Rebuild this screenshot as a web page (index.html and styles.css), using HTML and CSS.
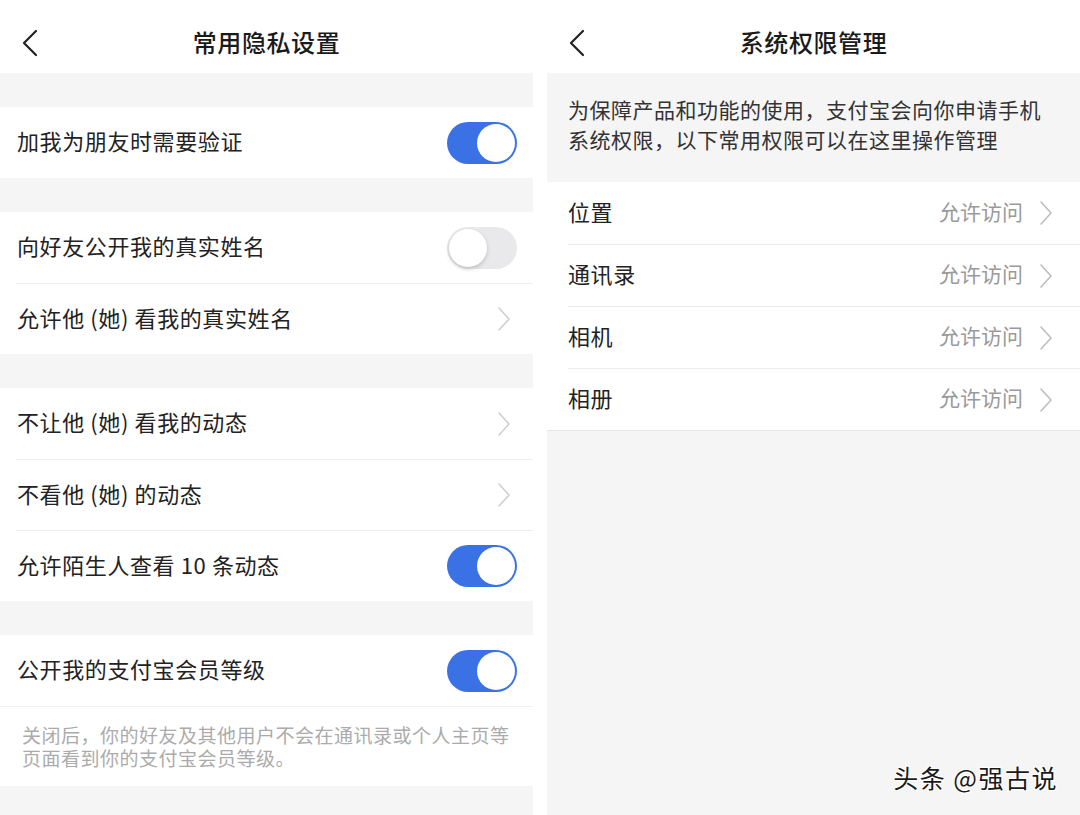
FILE: index.html
```html
<!DOCTYPE html>
<html lang="zh-CN">
<head>
    <meta charset="UTF-8">
    <meta name="viewport" content="width=device-width, initial-scale=1.0">
    <title>隐私设置</title>
    <link rel="stylesheet" href="styles.css">
</head>
<body>
    <div id="pantallas">
        <!-- pantalla izquierda -->
        <div class="pantalla">
            <div class="cabecera">
                <svg class="atras" width="20" height="30" viewBox="0 0 20 30"><path d="M16 3 L4 15 L16 27" fill="none" stroke="#222" stroke-width="2.2" stroke-linecap="round" stroke-linejoin="round"/></svg>
                <div class="titulo">常用隐私设置</div>
            </div>

            <div class="hueco"></div>
            <div class="grupo">
                <div class="fila">
                    <span class="etiqueta">加我为朋友时需要验证</span>
                    <span class="interruptor activo"><span class="perilla"></span></span>
                </div>
            </div>

            <div class="hueco"></div>
            <div class="grupo">
                <div class="fila">
                    <span class="etiqueta">向好友公开我的真实姓名</span>
                    <span class="interruptor"><span class="perilla"></span></span>
                </div>
                <div class="fila">
                    <span class="etiqueta">允许他 (她) 看我的真实姓名</span>
                    <svg class="flecha" width="14" height="26" viewBox="0 0 14 26"><path d="M2 2 L12 13 L2 24" fill="none" stroke="#cfcfcf" stroke-width="1.6" stroke-linecap="round" stroke-linejoin="round"/></svg>
                </div>
            </div>

            <div class="hueco"></div>
            <div class="grupo">
                <div class="fila">
                    <span class="etiqueta">不让他 (她) 看我的动态</span>
                    <svg class="flecha" width="14" height="26" viewBox="0 0 14 26"><path d="M2 2 L12 13 L2 24" fill="none" stroke="#cfcfcf" stroke-width="1.6" stroke-linecap="round" stroke-linejoin="round"/></svg>
                </div>
                <div class="fila">
                    <span class="etiqueta">不看他 (她) 的动态</span>
                    <svg class="flecha" width="14" height="26" viewBox="0 0 14 26"><path d="M2 2 L12 13 L2 24" fill="none" stroke="#cfcfcf" stroke-width="1.6" stroke-linecap="round" stroke-linejoin="round"/></svg>
                </div>
                <div class="fila">
                    <span class="etiqueta">允许陌生人查看 10 条动态</span>
                    <span class="interruptor activo"><span class="perilla"></span></span>
                </div>
            </div>

            <div class="hueco"></div>
            <div class="grupo">
                <div class="fila">
                    <span class="etiqueta">公开我的支付宝会员等级</span>
                    <span class="interruptor activo"><span class="perilla"></span></span>
                </div>
            </div>
            <div class="nota">关闭后，你的好友及其他用户不会在通讯录或个人主页等页面看到你的支付宝会员等级。</div>
            <div class="relleno"></div>
        </div>

        <!-- pantalla derecha -->
        <div class="pantalla">
            <div class="cabecera">
                <svg class="atras" width="20" height="30" viewBox="0 0 20 30"><path d="M16 3 L4 15 L16 27" fill="none" stroke="#222" stroke-width="2.2" stroke-linecap="round" stroke-linejoin="round"/></svg>
                <div class="titulo">系统权限管理</div>
            </div>

            <div class="descripcion">为保障产品和功能的使用，支付宝会向你申请手机系统权限，以下常用权限可以在这里操作管理</div>

            <div class="grupo permisos">
                <div class="fila corta">
                    <span class="etiqueta">位置</span>
                    <span class="valor">允许访问</span>
                    <svg class="flecha" width="14" height="26" viewBox="0 0 14 26"><path d="M2 2 L12 13 L2 24" fill="none" stroke="#bdbdbd" stroke-width="1.6" stroke-linecap="round" stroke-linejoin="round"/></svg>
                </div>
                <div class="fila corta">
                    <span class="etiqueta">通讯录</span>
                    <span class="valor">允许访问</span>
                    <svg class="flecha" width="14" height="26" viewBox="0 0 14 26"><path d="M2 2 L12 13 L2 24" fill="none" stroke="#bdbdbd" stroke-width="1.6" stroke-linecap="round" stroke-linejoin="round"/></svg>
                </div>
                <div class="fila corta">
                    <span class="etiqueta">相机</span>
                    <span class="valor">允许访问</span>
                    <svg class="flecha" width="14" height="26" viewBox="0 0 14 26"><path d="M2 2 L12 13 L2 24" fill="none" stroke="#bdbdbd" stroke-width="1.6" stroke-linecap="round" stroke-linejoin="round"/></svg>
                </div>
                <div class="fila corta">
                    <span class="etiqueta">相册</span>
                    <span class="valor">允许访问</span>
                    <svg class="flecha" width="14" height="26" viewBox="0 0 14 26"><path d="M2 2 L12 13 L2 24" fill="none" stroke="#bdbdbd" stroke-width="1.6" stroke-linecap="round" stroke-linejoin="round"/></svg>
                </div>
            </div>
            <div class="relleno"></div>

            <div class="marca">头条 @强古说</div>
        </div>
    </div>
</body>
</html>
```

FILE: styles.css
```css
* {
    margin: 0;
    padding: 0;
    box-sizing: border-box;
}

html, body {
    width: 1080px;
    height: 815px;
    background-color: white;
    font-family: "Noto Sans CJK SC", "Noto Sans", sans-serif;
    color: #222;
    overflow: hidden;
}

#pantallas {
    display: flex;
    gap: 14px;
    width: 1080px;
    height: 815px;
}

.pantalla {
    position: relative;
    width: 533px;
    height: 815px;
    display: flex;
    flex-direction: column;
    background-color: #f5f5f6;
}

.cabecera {
    position: relative;
    height: 73px;
    flex: none;
    background-color: white;
    display: flex;
    align-items: center;
    justify-content: center;
}

.atras {
    position: absolute;
    left: 20px;
    top: 28px;
}

.titulo {
    font-size: 24px;
    font-weight: 500;
    letter-spacing: 0.6px;
    color: #1a1a1a;
    margin-top: 10px;
}

.hueco {
    height: 34px;
    flex: none;
}

.grupo {
    background-color: white;
    flex: none;
}

.fila {
    height: 71px;
    display: flex;
    align-items: center;
    padding: 0 16px 0 1px;
    border-top: 1px solid #ededed;
    margin-left: 16px;
}

.fila:first-child {
    border-top: none;
    margin-left: 0;
    padding-left: 17px;
}

.etiqueta {
    flex: 1;
    font-size: 22px;
    color: #222;
    letter-spacing: 0.6px;
    margin-bottom: 5px;
}

/* interruptor tipo iOS */
.interruptor {
    width: 70px;
    height: 42px;
    border-radius: 21px;
    background-color: #e9e9eb;
    position: relative;
    flex: none;
}

.interruptor .perilla {
    position: absolute;
    top: 2px;
    left: 2px;
    width: 38px;
    height: 38px;
    border-radius: 50%;
    background-color: white;
    box-shadow: 0 2px 4px rgba(0, 0, 0, 0.18);
}

.interruptor.activo {
    background-color: #3a72e6;
}

.interruptor.activo .perilla {
    left: 30px;
    box-shadow: none;
}

.flecha {
    flex: none;
    margin-right: 6px;
}

.nota {
    background-color: white;
    padding: 16px 8px 17px 22px;
    font-size: 19px;
    line-height: 23px;
    letter-spacing: 0.5px;
    color: #ababab;
    border-top: 1px solid #f0f0f0;
    flex: none;
}

.relleno {
    flex: 1;
}

.descripcion {
    height: 109px;
    flex: none;
    padding: 21px 20px 0 21px;
    font-size: 21px;
    line-height: 30px;
    letter-spacing: 0.5px;
    color: #333;
}

.permisos .fila.corta {
    height: 62px;
    padding-right: 27px;
    margin-left: 21px;
    padding-left: 0;
    border-top: 1px solid #ebebeb;
}

.permisos .fila.corta:first-child {
    border-top: none;
    margin-left: 0;
    padding-left: 21px;
}

.permisos {
    border-bottom: 1px solid #e6e6e6;
}

.valor {
    font-size: 21px;
    color: #9a9a9a;
    margin-right: 16px;
    margin-bottom: 5px;
}

.permisos .flecha {
    margin-right: 0;
}

.marca {
    position: absolute;
    right: 22px;
    bottom: 20px;
    font-size: 25px;
    letter-spacing: 1.5px;
    color: #1a1a1a;
    text-shadow: 1px 1px 0 white, -1px -1px 0 white, 1px -1px 0 white, -1px 1px 0 white;
}
```
